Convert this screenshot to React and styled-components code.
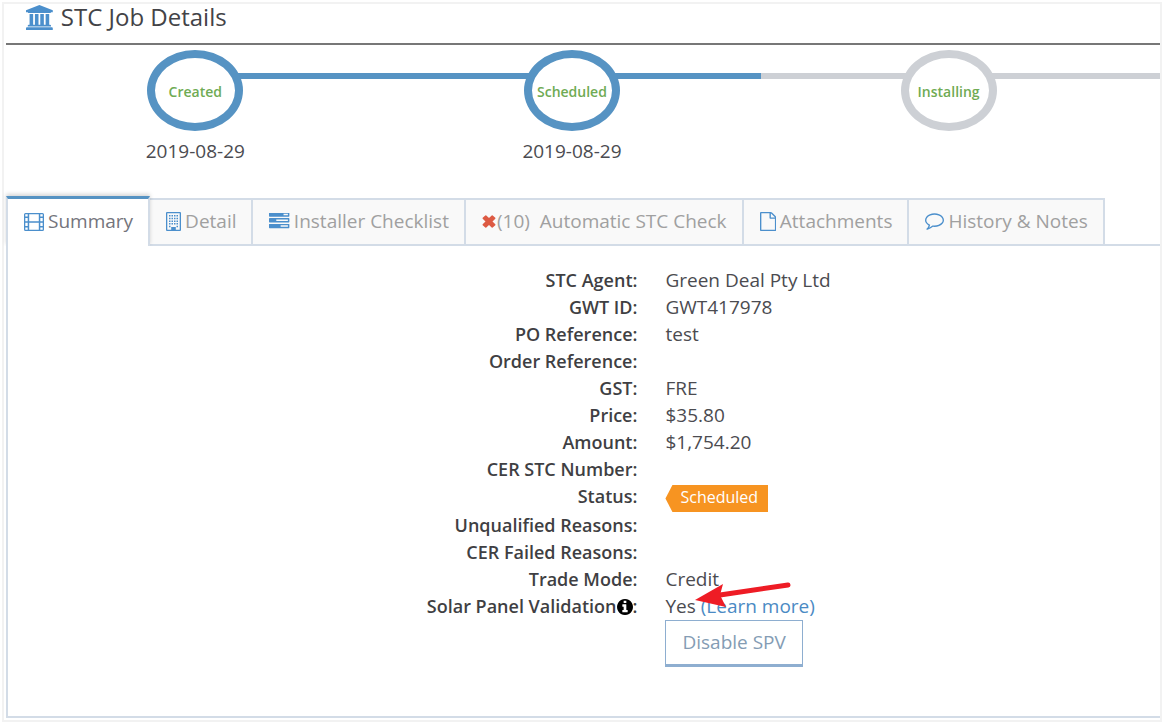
import React from "react";
import styled, { createGlobalStyle, css } from "styled-components";

const blue = "#5693c3";
const grey = "#cdd0d5";
const line = "#d3dce7";

const GlobalStyle = createGlobalStyle`
  * { box-sizing: border-box; }
  body {
    margin: 0;
    background: #fff;
    color: #4b4b50;
    font-family: "Open Sans", "Noto Sans", sans-serif;
    font-size: 19px;
    line-height: 27px;
  }
`;

const Frame = styled.main`
  margin: 2px 5px 0 2px;
  padding: 0 0 2px 2px;
  border: 2px solid #f2f2f2;
`;

const Header = styled.header`
  display: flex;
  align-items: center;
  gap: 8px;
  height: 41px;
  padding: 0 20px 13px;
  border-bottom: 2px solid #777;
`;

const Title = styled.h1`
  margin: 0;
  font-size: 24px;
  font-weight: 400;
  line-height: 26px;
  color: #434347;
`;

const Glyph = styled.svg`
  flex: none;
  display: block;
  height: ${(p) => p.$size}px;
  fill: ${(p) => p.$color || "#4b8fcc"};
`;

const Steps = styled.ol`
  display: grid;
  grid-template-columns: 98fr 98fr 98fr 6fr;
  margin: 0;
  padding: 5px 0 0 1px;
  list-style: none;
  height: 151px;
  background: linear-gradient(
      to right,
      transparent 16%,
      ${blue} 16% 65.4%,
      ${grey} 65.4%
    )
    no-repeat 0 28px / 100% 6px;
`;

const Step = styled.li`
  display: flex;
  flex-direction: column;
  align-items: center;
  gap: 7px;
`;

const Ring = styled.span`
  display: flex;
  align-items: center;
  justify-content: center;
  width: 96px;
  height: 81px;
  padding-top: 2px;
  border: 8px solid ${(p) => (p.$done ? blue : grey)};
  border-radius: 50%;
  background: #fff;
  color: #6fab54;
  font-size: 14px;
  font-weight: 600;
`;

const Tabs = styled.div`
  display: flex;
  align-items: flex-end;
  border-bottom: 2px solid ${line};
`;

const Tab = styled.button`
  display: flex;
  align-items: center;
  gap: ${(p) => (p.$tight ? 1 : 4)}px;
  height: 46px;
  padding: 0 15px 2px 16px;
  border: solid ${line};
  border-width: 2px 2px 0 0;
  background: #f9f9f9;
  color: #a0a0a0;
  font: inherit;
  white-space: pre;
  ${(p) =>
    p.$active &&
    css`
      height: 50px;
      margin-bottom: -2px;
      border-top: 3px solid ${blue};
      border-left: 2px solid ${line};
      background: #fff;
      color: #74747c;
      box-shadow: 0 -2px 4px rgba(0, 0, 0, 0.16);
      clip-path: inset(-6px -4px 0 -4px);
    `}
`;

const Panel = styled.section`
  border: solid ${line};
  border-width: 0 0 2px 2px;
  padding: 21px 0 49px;
`;

const Facts = styled.dl`
  display: grid;
  grid-template-columns: 14fr 11fr;
  column-gap: 28px;
  margin: 0;
`;

const Label = styled.dt`
  display: flex;
  justify-content: flex-end;
  align-items: center;
  height: ${(p) => (p.$tall ? 29 : 27)}px;
  padding-bottom: ${(p) => (p.$tall ? 2 : 0)}px;
  font-size: 18px;
  font-weight: 600;
  color: #3f3f43;
  white-space: nowrap;
`;

const Value = styled.dd`
  margin: 0;
`;

const Badge = styled.span`
  display: block;
  width: fit-content;
  height: 27px;
  margin-top: 2px;
  padding: 0 10px 0 15px;
  background: #f79421;
  clip-path: polygon(0 50%, 7px 0, 100% 0, 100% 100%, 7px 100%);
  color: #fff;
  font-size: 16px;
  line-height: 24px;
`;

const Validation = styled.div`
  position: relative;
`;

const Pointer = styled.svg`
  position: absolute;
  left: 28px;
  top: -15px;
  pointer-events: none;
`;

const Link = styled.a`
  color: #4b8ac4;
  text-decoration: none;
`;

const Button = styled.button`
  display: block;
  height: 47px;
  padding: 0 16px;
  border: 1px solid #8eaed0;
  border-bottom-width: 3px;
  background: #fff;
  color: #849cb4;
  font: inherit;
`;

const icons = {
  bank: {
    box: "0 0 1920 1792",
    d: "M960 0l960 384v128h-128q0 26-20.5 45t-48.5 19h-1526q-28 0-48.5-19t-20.5-45h-128v-128zM256 640h256v768h128v-768h256v768h128v-768h256v768h128v-768h256v768h59q28 0 48.5 19t20.5 45v64h-1664v-64q0-26 20.5-45t48.5-19h59v-768zM1851 1600q28 0 48.5 19t20.5 45v128h-1920v-128q0-26 20.5-45t48.5-19h1782z",
  },
  film: {
    box: "0 0 20 18",
    d: "M1.500 0h17q1.500 0 1.500 1.500v15q0 1.500-1.500 1.500h-17q-1.500 0-1.500-1.500v-15q0-1.500 1.500-1.500zM1.300 1.300v2.300h2.400v-2.300zM1.300 5v3.200h2.400v-3.200zM1.300 9.700v3.200h2.400v-3.200zM1.300 14.400v2.300h2.400v-2.300zM16.300 1.300v2.300h2.400v-2.300zM16.300 5v3.200h2.400v-3.200zM16.300 9.700v3.200h2.400v-3.200zM16.300 14.400v2.300h2.400v-2.300zM5.200 1.300v7h9.600v-7zM5.200 9.700v7h9.600v-7z",
  },
  building: {
    box: "0 0 15 19",
    d: "M1 0h13q1 0 1 1v17q0 1-1 1h-13q-1 0-1-1v-17q0-1 1-1zM1.300 1.300v16.400h3.900v-2.700h4.600v2.700h3.900v-16.400zM3 3h1.500v1.500h-1.500zM5.500 3h1.500v1.500h-1.500zM8 3h1.500v1.500h-1.500zM10.500 3h1.500v1.500h-1.500zM3 5.700h1.500v1.500h-1.500zM5.500 5.700h1.500v1.500h-1.500zM8 5.700h1.500v1.500h-1.500zM10.500 5.700h1.500v1.500h-1.500zM3 8.400h1.500v1.500h-1.500zM5.500 8.400h1.500v1.500h-1.500zM8 8.400h1.500v1.500h-1.500zM10.500 8.400h1.500v1.500h-1.500zM3 11.100h1.500v1.500h-1.500zM5.500 11.100h1.500v1.500h-1.500zM8 11.100h1.500v1.500h-1.500zM10.500 11.100h1.500v1.500h-1.500zM3 13.800h1.500v1.500h-1.500zM10.500 13.800h1.500v1.500h-1.500z",
  },
  tasks: {
    box: "0 192 1792 1408",
    d: "M1024 1408h640v-128h-640zM640 896h1024v-128h-1024zM1280 384h384v-128h-384zM1792 1216v256q0 26-19 45t-45 19h-1664q-26 0-45-19t-19-45v-256q0-26 19-45t45-19h1664q26 0 45 19t19 45zM1792 704v256q0 26-19 45t-45 19h-1664q-26 0-45-19t-19-45v-256q0-26 19-45t45-19h1664q26 0 45 19t19 45zM1792 192v256q0 26-19 45t-45 19h-1664q-26 0-45-19t-19-45v-256q0-26 19-45t45-19h1664q26 0 45 19t19 45z",
  },
  cross: {
    box: "0 0 14 13",
    d: "M3.300 .4Q3.800 0 4.300 .4L7 3L9.700 .4Q10.200 0 10.700 .4L13.300 2.800Q13.700 3.300 13.300 3.800L10.500 6.500L13.300 9.200Q13.700 9.700 13.300 10.200L10.700 12.600Q10.200 13 9.700 12.600L7 10L4.300 12.600Q3.800 13 3.300 12.600L.7 10.200Q.3 9.700 .7 9.200L3.500 6.500L.7 3.800Q.3 3.300 .7 2.800Z",
  },
  file: {
    box: "0 0 1536 1792",
    d: "M1468 380q28 28 48 76t20 88v1152q0 40-28 68t-68 28h-1344q-40 0-68-28t-28-68v-1600q0-40 28-68t68-28h896q40 0 88 20t76 48zM1024 136v376h376q-10-29-22-41l-313-313q-12-12-41-22zM1408 1664v-1024h-416q-40 0-68-28t-28-68v-416h-768v1536h1280z",
  },
  comment: {
    box: "0 128 1792 1792",
    d: "M896 384q-204 0-381.5 69.5t-282 187.5-104.5 255q0 112 71.5 213.5t201.5 175.5l87 50-27 96q-24 91-70 172 152-63 275-171l43-38 57 6q69 8 130 8 204 0 381.5-69.5t282-187.5 104.5-255-104.5-255-282-187.5-381.5-69.5zM1792 896q0 174-120 321.5t-326 233-450 85.5q-70 0-145-8-198 175-460 242-49 14-114 22h-5q-15 0-27-10.5t-16-27.5v-1q-3-4-.5-12t2-10 4.500-9.500l6-9 7-8.500 8-9q7-8 31-34.500t34.500-38 31-39.500 32.500-51 27-59 26-76q-157-89-247.500-220t-90.500-281q0-174 120-321.500t326-233 450-85.500 450 85.500 326 233 120 321.500z",
  },
  info: {
    box: "0 128 1536 1536",
    d: "M1024 1376v-160q0-14-9-23t-23-9h-96v-512q0-14-9-23t-23-9h-320q-14 0-23 9t-9 23v160q0 14 9 23t23 9h96v320h-96q-14 0-23 9t-9 23v160q0 14 9 23t23 9h448q14 0 23-9t9-23zM896 480v-160q0-14-9-23t-23-9h-192q-14 0-23 9t-9 23v160q0 14 9 23t23 9h192q14 0 23-9t9-23zM1536 896q0 209-103 385.500t-279.500 279.500-385.500 103-385.500-103-279.500-279.500-103-385.500 103-385.500 279.500-279.500 385.500-103 385.500 103 279.500 279.500 103 385.500z",
  },
};

function Icon({ name, size, color }) {
  const { box, d } = icons[name];
  return (
    <Glyph viewBox={box} $size={size} $color={color} aria-hidden="true">
      <path d={d} fillRule={name === "building" || name === "film" || name === "tasks" ? "evenodd" : "nonzero"} />
    </Glyph>
  );
}

const steps = [
  { name: "Created", date: "2019-08-29", done: true },
  { name: "Scheduled", date: "2019-08-29", done: true },
  { name: "Installing", done: false },
];

const tabs = [
  { icon: "film", size: 18, text: "Summary" },
  { icon: "building", size: 19, text: "Detail" },
  { icon: "tasks", size: 16, text: "Installer Checklist" },
  { icon: "cross", size: 13, color: "#dd5a43", tight: true, text: "(10)  Automatic STC Check" },
  { icon: "file", size: 19, text: "Attachments" },
  { icon: "comment", size: 19, text: "History & Notes" },
];

const facts = [
  ["STC Agent", "Green Deal Pty Ltd"],
  ["GWT ID", "GWT417978"],
  ["PO Reference", "test"],
  ["Order Reference", ""],
  ["GST", "FRE"],
  ["Price", "$35.80"],
  ["Amount", "$1,754.20"],
  ["CER STC Number", ""],
  ["Status", <Badge>Scheduled</Badge>],
  ["Unqualified Reasons", ""],
  ["CER Failed Reasons", ""],
  ["Trade Mode", "Credit"],
];

export default function App() {
  return (
    <>
      <GlobalStyle />
      <Frame>
        <Header>
          <Icon name="bank" size={25} />
          <Title>STC Job Details</Title>
        </Header>
        <Steps>
          {steps.map((s) => (
            <Step key={s.name}>
              <Ring $done={s.done}>{s.name}</Ring>
              {s.date && <time>{s.date}</time>}
            </Step>
          ))}
        </Steps>
        <Tabs role="tablist">
          {tabs.map((t, i) => (
            <Tab
              key={t.text}
              type="button"
              role="tab"
              aria-selected={i === 0}
              $active={i === 0}
              $tight={t.tight}
            >
              <Icon name={t.icon} size={t.size} color={t.color} />
              {t.text}
            </Tab>
          ))}
        </Tabs>
        <Panel>
          <Facts>
            {facts.map(([label, value]) => (
              <React.Fragment key={label}>
                <Label $tall={label === "Status"}>{label}:</Label>
                <Value>{value}</Value>
              </React.Fragment>
            ))}
            <Label>
              Solar Panel Validation
              <Icon name="info" size={16} color="#000" />:
            </Label>
            <Value>
              <Validation>
                Yes <Link href="#learn-more">(Learn more)</Link>
                <Pointer width="100" height="30" viewBox="0 0 100 30" aria-hidden="true">
                  <path d="M27 17L95 7" stroke="#ee1c25" strokeWidth="5" strokeLinecap="round" />
                  <path d="M2 22L30 6L27 17L33 29Z" fill="#ee1c25" />
                </Pointer>
              </Validation>
              <Button type="button">Disable SPV</Button>
            </Value>
          </Facts>
        </Panel>
      </Frame>
    </>
  );
}
